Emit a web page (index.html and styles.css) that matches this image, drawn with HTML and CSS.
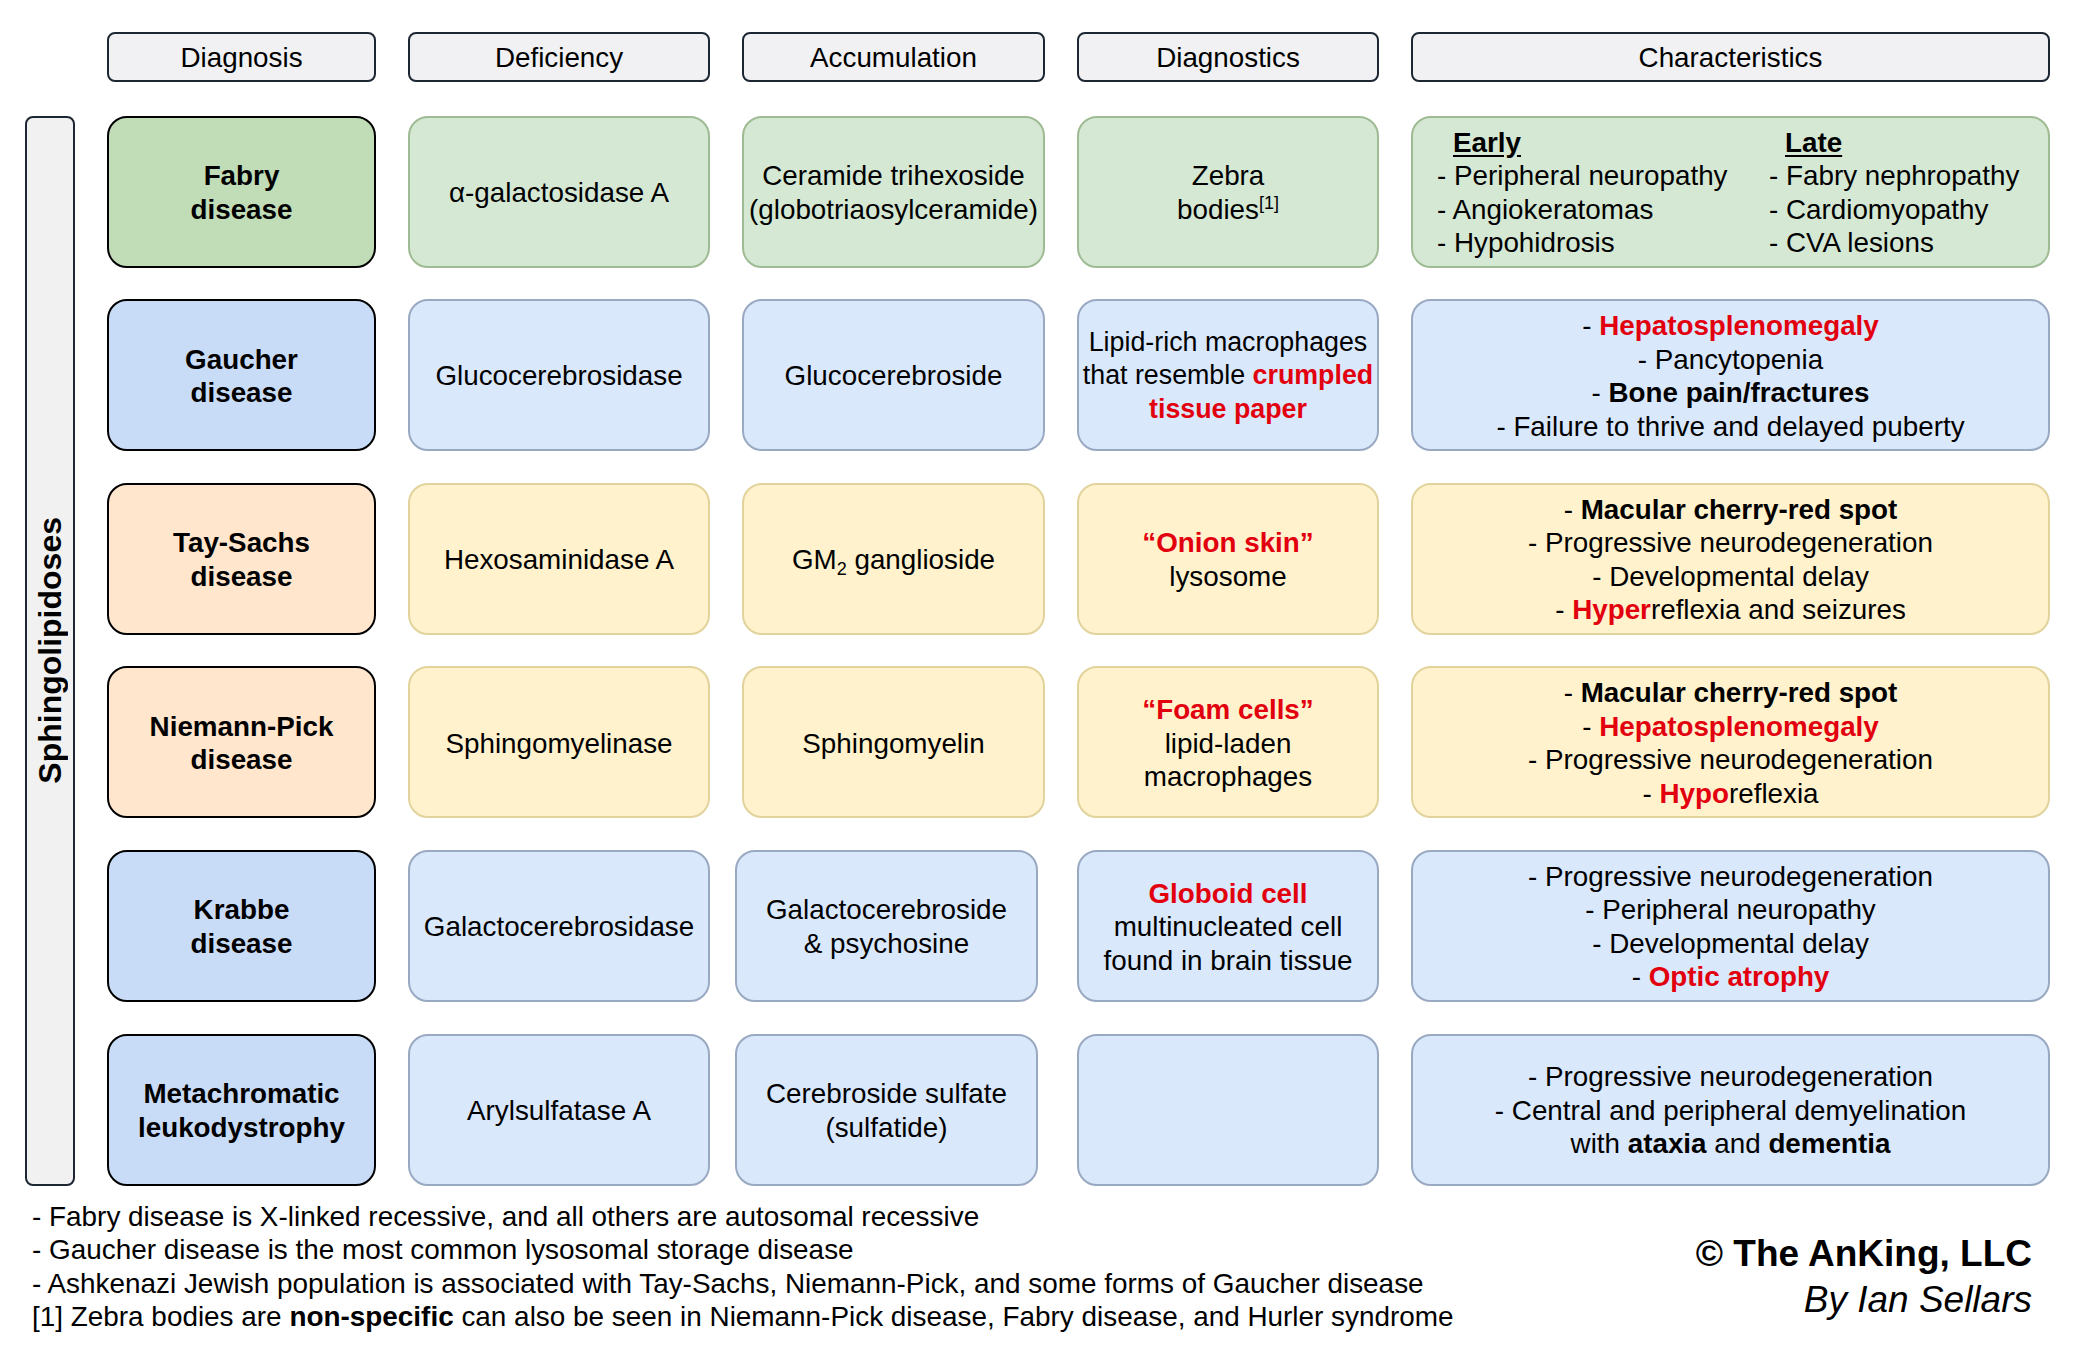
FILE: index.html
```html
<!DOCTYPE html>
<html lang="en">
<head>
<meta charset="utf-8">
<title>Sphingolipidoses</title>
<link rel="stylesheet" href="styles.css">
</head>
<body>
<main class="sheet">
  <section class="table">
    <div class="spacer"></div>
    <div class="head">Diagnosis</div>
    <div class="head">Deficiency</div>
    <div class="head">Accumulation</div>
    <div class="head">Diagnostics</div>
    <div class="head">Characteristics</div>

    <div class="side"><span>Sphingolipidoses</span></div>

    <!-- Fabry -->
    <div class="cell dx dx-green"><div>Fabry<br>disease</div></div>
    <div class="cell green"><div>α-galactosidase A</div></div>
    <div class="cell green"><div>Ceramide trihexoside<br>(globotriaosylceramide)</div></div>
    <div class="cell green"><div>Zebra<br>bodies<sup class="ref">[1]</sup></div></div>
    <div class="cell green split">
      <div class="col">
        <div class="sub">Early</div>
        <div>- Peripheral neuropathy</div>
        <div>- Angiokeratomas</div>
        <div>- Hypohidrosis</div>
      </div>
      <div class="col">
        <div class="sub">Late</div>
        <div>- Fabry nephropathy</div>
        <div>- Cardiomyopathy</div>
        <div>- CVA lesions</div>
      </div>
    </div>

    <!-- Gaucher -->
    <div class="cell dx dx-blue"><div>Gaucher<br>disease</div></div>
    <div class="cell blue"><div>Glucocerebrosidase</div></div>
    <div class="cell blue"><div>Glucocerebroside</div></div>
    <div class="cell blue"><div class="tight">Lipid-rich macrophages<br>that resemble <b class="red">crumpled<br>tissue paper</b></div></div>
    <div class="cell blue">
      <div>- <b class="red">Hepatosplenomegaly</b></div>
      <div>- Pancytopenia</div>
      <div>- <b>Bone pain/fractures</b></div>
      <div>- Failure to thrive and delayed puberty</div>
    </div>

    <!-- Tay-Sachs -->
    <div class="cell dx dx-peach"><div>Tay-Sachs<br>disease</div></div>
    <div class="cell yellow"><div>Hexosaminidase A</div></div>
    <div class="cell yellow"><div>GM<sub class="low">2</sub> ganglioside</div></div>
    <div class="cell yellow"><div><b class="red">“Onion skin”</b><br>lysosome</div></div>
    <div class="cell yellow">
      <div>- <b>Macular cherry-red spot</b></div>
      <div>- Progressive neurodegeneration</div>
      <div>- Developmental delay</div>
      <div>- <b class="red">Hyper</b>reflexia and seizures</div>
    </div>

    <!-- Niemann-Pick -->
    <div class="cell dx dx-peach"><div>Niemann-Pick<br>disease</div></div>
    <div class="cell yellow"><div>Sphingomyelinase</div></div>
    <div class="cell yellow"><div>Sphingomyelin</div></div>
    <div class="cell yellow"><div><b class="red">“Foam cells”</b><br>lipid-laden<br>macrophages</div></div>
    <div class="cell yellow">
      <div>- <b>Macular cherry-red spot</b></div>
      <div>- <b class="red">Hepatosplenomegaly</b></div>
      <div>- Progressive neurodegeneration</div>
      <div>- <b class="red">Hypo</b>reflexia</div>
    </div>

    <!-- Krabbe -->
    <div class="cell dx dx-blue"><div>Krabbe<br>disease</div></div>
    <div class="cell blue"><div>Galactocerebrosidase</div></div>
    <div class="cell blue nudge"><div>Galactocerebroside<br>&amp; psychosine</div></div>
    <div class="cell blue"><div><b class="red">Globoid cell</b><br>multinucleated cell<br>found in brain tissue</div></div>
    <div class="cell blue">
      <div>- Progressive neurodegeneration</div>
      <div>- Peripheral neuropathy</div>
      <div>- Developmental delay</div>
      <div>- <b class="red">Optic atrophy</b></div>
    </div>

    <!-- Metachromatic leukodystrophy -->
    <div class="cell dx dx-blue"><div>Metachromatic<br>leukodystrophy</div></div>
    <div class="cell blue"><div>Arylsulfatase A</div></div>
    <div class="cell blue nudge"><div>Cerebroside sulfate<br>(sulfatide)</div></div>
    <div class="cell blue"></div>
    <div class="cell blue">
      <div>- Progressive neurodegeneration</div>
      <div>- Central and peripheral demyelination</div>
      <div>with <b>ataxia</b> and <b>dementia</b></div>
    </div>
  </section>

  <footer class="notes">
    <div class="notes-list">
      <p>- Fabry disease is X-linked recessive, and all others are autosomal recessive</p>
      <p>- Gaucher disease is the most common lysosomal storage disease</p>
      <p>- Ashkenazi Jewish population is associated with Tay-Sachs, Niemann-Pick, and some forms of Gaucher disease</p>
      <p>[1] Zebra bodies are <b>non-specific</b> can also be seen in Niemann-Pick disease, Fabry disease, and Hurler syndrome</p>
    </div>
    <div class="credit">
      <div class="owner">© The AnKing, LLC</div>
      <div class="author">By Ian Sellars</div>
    </div>
  </footer>
</main>
</body>
</html>
```

FILE: styles.css
```css
html, body {
  margin: 0;
  padding: 0;
  background: #ffffff;
}

body {
  font-family: "Liberation Sans", Arial, sans-serif;
  color: #000000;
}

.sheet {
  width: 2077px;
}

.table {
  display: grid;
  grid-template-columns: 50px 269px 302px 303px 302px 639px;
  grid-template-rows: 52px repeat(6, 152px);
  column-gap: 32px;
  row-gap: 31.6px;
  padding: 32px 0 0 25px;
}

.head {
  align-self: start;
  height: 50px;
  box-sizing: border-box;
  border: 2px solid #1c2733;
  border-radius: 8px;
  background: #f1f1f3;
  display: flex;
  align-items: center;
  justify-content: center;
  padding-top: 2px;
  font-size: 27.8px;
}

.side {
  grid-column: 1;
  grid-row: 2 / span 6;
  box-sizing: border-box;
  border: 2px solid #1c2733;
  border-radius: 8px;
  background: #f1f1f1;
  display: flex;
  align-items: center;
  justify-content: center;
}

.side span {
  writing-mode: vertical-rl;
  transform: rotate(180deg);
  font-weight: bold;
  font-size: 32px;
  line-height: 1;
}

.cell {
  box-sizing: border-box;
  border: 2px solid;
  border-radius: 20px;
  display: flex;
  flex-direction: column;
  align-items: center;
  justify-content: center;
  text-align: center;
  padding-top: 2px;
  font-size: 27.8px;
  line-height: 33.5px;
}

.tight {
  white-space: nowrap;
  font-size: 26.8px;
}

.dx {
  border-color: #000000;
  font-weight: bold;
}

.dx-green { background: #c0ddb8; }
.dx-blue { background: #c9dcf7; }
.dx-peach { background: #ffe6cc; }

.green {
  background: #d5e8d4;
  border-color: #9fbb94;
}

.blue {
  background: #dae8fc;
  border-color: #9aa9c2;
}

.yellow {
  background: #fff2cc;
  border-color: #e2d39c;
}

.nudge {
  margin-left: -7px;
  margin-right: 7px;
}

.split {
  display: grid;
  grid-template-columns: 332px auto;
  align-content: center;
  justify-content: start;
  padding-left: 24px;
  text-align: left;
}

.split .sub {
  font-weight: bold;
  text-decoration: underline;
  text-underline-offset: 3px;
  padding-left: 16px;
}

.red {
  color: #e2000f;
}

.ref {
  font-size: 18px;
  line-height: 0;
  vertical-align: 10px;
}

.low {
  font-size: 18px;
  line-height: 0;
  vertical-align: -6px;
}

.notes {
  display: flex;
  justify-content: space-between;
  align-items: flex-start;
  padding: 14px 45px 0 32px;
}

.notes-list {
  font-size: 27.9px;
  line-height: 33.5px;
}

.notes-list p {
  margin: 0;
}

.credit {
  margin-top: 31px;
  text-align: right;
  font-size: 37px;
  line-height: 46px;
}

.owner {
  font-weight: bold;
}

.author {
  font-style: italic;
}
```
